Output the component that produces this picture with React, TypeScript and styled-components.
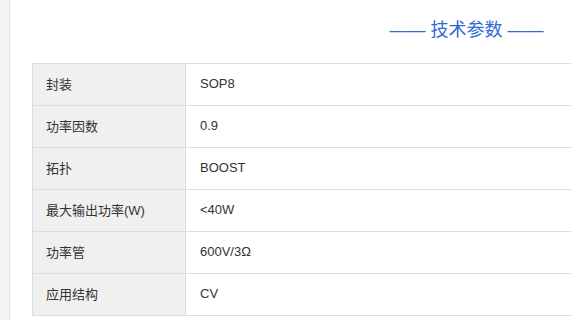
import React from "react";
import styled, { createGlobalStyle } from "styled-components";

const Global = createGlobalStyle`
  html, body { margin: 0; padding: 0; background: #fff; overflow: hidden; }
  body { font-family: "Liberation Sans", "Noto Sans CJK SC", sans-serif; }
`;

const Page = styled.div`
  display: flex;
  min-height: 320px;
`;

const Sidebar = styled.div`
  flex: 0 0 9px;
  background: #f3f3f3;
  border-right: 1px solid #e4e4e4;
`;

const Main = styled.div`
  flex: 0 0 auto;
  padding-left: 22px;
`;

const Content = styled.div`
  width: 869px;
`;

const Title = styled.h2`
  margin: 18px 0 21px;
  height: 24px;
  line-height: 24px;
  font-size: 18px;
  font-weight: normal;
  color: #3068d4;
  text-align: center;
  white-space: pre;
`;

const Table = styled.div`
  border-top: 1px solid #dddddd;
  border-left: 1px solid #dddddd;
`;

const Row = styled.div`
  display: grid;
  grid-template-columns: 153px 1fr;
  height: 42px;
  box-sizing: border-box;
  border-bottom: 1px solid #dddddd;
`;

const Cell = styled.div<{ $head?: boolean }>`
  display: flex;
  align-items: center;
  box-sizing: border-box;
  padding-left: ${(p) => (p.$head ? "13px" : "14px")};
  padding-bottom: 2px;
  background: ${(p) => (p.$head ? "#f0f0f0" : "#ffffff")};
  border-right: ${(p) => (p.$head ? "1px solid #dddddd" : "none")};
  font-size: 13px;
  color: #333333;
`;

const rows: [string, string][] = [
  ["封装", "SOP8"],
  ["功率因数", "0.9"],
  ["拓扑", "BOOST"],
  ["最大输出功率(W)", "<40W"],
  ["功率管", "600V/3Ω"],
  ["应用结构", "CV"],
];

export default function App() {
  return (
    <>
      <Global />
      <Page>
        <Sidebar />
        <Main>
          <Content>
            <Title>{"—— 技术参数 ——"}</Title>
            <Table>
              {rows.map(([k, v]) => (
                <Row key={k}>
                  <Cell $head>{k}</Cell>
                  <Cell>{v}</Cell>
                </Row>
              ))}
            </Table>
          </Content>
        </Main>
      </Page>
    </>
  );
}
